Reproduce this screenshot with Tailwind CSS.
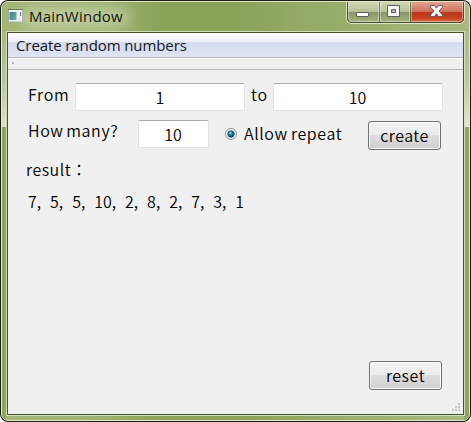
<!DOCTYPE html>
<html lang="en">
<head>
<meta charset="utf-8">
<title>MainWindow</title>
<script src="https://cdn.jsdelivr.net/npm/@tailwindcss/browser@4"></script>
</head>
<body class="bg-white overflow-hidden">
<div class="w-[471px] h-[422px] rounded-[8px] bg-[#1c1f14] p-px pt-px">
<div class="w-full h-full rounded-[7px] border border-[#dfe8c9] bg-[linear-gradient(90deg,#a3b676_0%,#9fb473_18%,#8ba259_35%,#8ba259_50%,#94aa66_65%,#a6ba7f_100%)] flex flex-col overflow-hidden relative">
  <div class="absolute left-0 top-[29px] w-[4px] h-[96px] bg-[linear-gradient(180deg,#a6b97c,#b9c699_50%,#dde3c9)]"></div>
  <div class="absolute right-0 top-[29px] w-[5px] h-[96px] bg-[linear-gradient(180deg,#a9bd82,#b9c699_50%,#e2e8d4)]"></div>
  <div class="absolute left-0 top-[125px] w-[4px] h-[293px] bg-[#8fa45c]"></div>
  <div class="absolute right-0 top-[125px] w-[5px] h-[293px] bg-[#90a55f]"></div>

  <header class="h-[29px] shrink-0 flex items-start">
    <svg class="ml-[6px] mt-[7px] shrink-0" width="15" height="14" viewBox="0 0 15 14">
      <defs><linearGradient id="pane" x1="0" y1="0" x2="1" y2="1"><stop stop-color="#3f7793"/><stop offset="1" stop-color="#68ad94"/></linearGradient></defs>
      <rect x=".5" y=".5" width="14" height="12.5" fill="#f2f3f3" stroke="#a3aaa9"/>
      <path d="M0 .5h15" stroke="#65716e"/>
      <rect x="1.5" y="3" width="7" height="8" fill="url(#pane)"/>
      <path d="M12.5 3v4" stroke="#526a87"/><path d="M10 10.5h3" stroke="#cbd0d0"/>
    </svg>
    <div class="ml-[6px] mt-[3px] relative">
      <div class="absolute -left-2 -right-2 top-[3px] h-[20px] rounded-full bg-[#e9eedb]/45 blur-[7px]"></div>
      <span class="relative block whitespace-nowrap text-[15px] leading-[22px] tracking-[0.25px] text-[#15170f] font-['Open_Sans',sans-serif]">MainWindow</span>
    </div>
    <div class="ml-auto -mt-px mr-[4px] shrink-0">
      <svg width="119" height="23" viewBox="0 0 119 23">
        <defs>
          <linearGradient id="glass" x1="0" y1="0" x2="0" y2="1"><stop stop-color="#d0dab9"/><stop offset=".48" stop-color="#b4c095"/><stop offset=".5" stop-color="#879669"/><stop offset="1" stop-color="#a8bb80"/></linearGradient>
          <linearGradient id="red" x1="0" y1="0" x2="0" y2="1"><stop stop-color="#e5a797"/><stop offset=".47" stop-color="#cc705b"/><stop offset=".5" stop-color="#b9371a"/><stop offset=".75" stop-color="#c9411f"/><stop offset="1" stop-color="#e28458"/></linearGradient>
          <clipPath id="shape"><path d="M1 0H118V17Q118 22 113 22H6Q1 22 1 17Z"/></clipPath>
        </defs>
        <g clip-path="url(#shape)">
          <rect width="64" height="23" fill="url(#glass)"/>
          <rect x="64" width="55" height="23" fill="url(#red)"/>
          <path d="M2.5 0V17Q2.5 20.5 6 20.5H32.5V0M34.5 0V20.5H63.5V0M65.5 0V20.5H113Q116.5 20.5 116.5 17V0" fill="none" stroke="#fff" stroke-opacity=".4"/>
          <path d="M33.5 0V22M64.500 0V22" stroke="#56613f" stroke-opacity=".75"/>
        </g>
        <path d="M.5 0V17Q.5 22.500 6 22.500H113Q118.500 22.500 118.500 17V0" fill="none" stroke="#edf2e1" stroke-opacity=".8"/>
        <path d="M1.500 0V17Q1.500 21.500 6 21.500H113Q117.500 21.500 117.500 17V0" fill="none" stroke="#48502f"/>
        <rect x="10.500" y="11.500" width="12" height="4" rx=".5" fill="#fff" stroke="#5b6060"/>
        <path d="M41.500 4.500h12v11h-12zM45.500 8.500v3h4v-3z" fill="#f7f7f7" fill-rule="evenodd" stroke="#5b6060"/>
        <path d="M84.500 4.500h4l2 2.700 2-2.700h4v1.600l-3.400 3.900 3.400 4v1.500h-4l-2-2.700-2 2.700h-4v-1.500l3.400-4-3.400-3.900z" fill="#fafafa" stroke="#685655"/>
      </svg>
    </div>
  </header>

  <div class="ml-[4px] w-[459px] h-[385px] relative border border-[#d3dfb8] shrink-0">
  <div class="w-full h-full border border-[#46522b] bg-[#f0f0f0] flex flex-col">
    <nav class="h-[24px] shrink-0 bg-[linear-gradient(180deg,#fff_0%,#eef1f9_36%,#d4dbed_38%,#dfe5f5_100%)] pl-[8px] font-['Open_Sans',sans-serif] text-[15px] leading-[25px] -tracking-[0.1px] text-[#17191d] whitespace-nowrap">Create random numbers</nav>
    <div class="h-[13px] shrink-0 border-y border-[#b6b6b6] shadow-[inset_0_1px_0_#fff] pl-[4px] pt-[4px]"><div class="w-[2px] h-[2px] bg-[#b2b2b2]"></div></div>

    <main class="flex-1 flex flex-col font-['Noto_Sans_CJK_TC',sans-serif] font-[350] text-[16px] leading-[24px] text-black whitespace-nowrap">
      <div class="flex items-start mt-[13px] h-[28px] pl-[20px]">
        <label class="w-[47px] -mt-px tracking-[0.7px]">From</label>
        <div class="w-[170px] h-[28px] rounded-[2px] border border-[#e2e3ea] border-t-[#abadb3] bg-white text-center pt-[1px]">1</div>
        <label class="w-[28px] -mt-px pl-[6px] tracking-[0.7px]">to</label>
        <div class="w-[170px] h-[28px] rounded-[2px] border border-[#e2e3ea] border-t-[#abadb3] bg-white text-center pt-[1px] pr-[1px]">10</div>
      </div>
      <div class="flex items-start mt-[9px] h-[31px] pl-[20px]">
        <label class="w-[110px] -mt-[2px] tracking-[0.6px] [word-spacing:-1.500px]">How many?</label>
        <div class="w-[71px] h-[28px] rounded-[2px] border border-[#e2e3ea] border-t-[#abadb3] bg-white text-center pt-[1px] pr-[1px]">10</div>
        <svg class="ml-[16px] mt-[8px]" width="12" height="12" viewBox="0 0 12 12">
          <defs><radialGradient id="dot" cx=".4" cy=".35" r=".65"><stop stop-color="#a9e4f5"/><stop offset=".4" stop-color="#278bb4"/><stop offset="1" stop-color="#0b3656"/></radialGradient></defs>
          <circle cx="6" cy="6" r="5.500" fill="#f7f7f7" stroke="#8e8f8f"/>
          <circle cx="6" cy="6" r="4" fill="#d9dfe2"/>
          <circle cx="6" cy="6" r="3.200" fill="url(#dot)" stroke="#173f5c" stroke-width=".7"/>
        </svg>
        <label class="ml-[7px] mt-px w-[124px] tracking-[0.6px] [word-spacing:-1px]">Allow repeat</label>
        <button class="mt-px w-[73px] h-[29px] rounded-[3px] border border-[#707070] bg-[linear-gradient(180deg,#f2f2f2_0%,#ebebeb_48%,#dddddd_50%,#cfcfcf_100%)] shadow-[inset_0_0_0_1px_#fafafa] leading-[24px] pt-[1px] tracking-[0.5px] flex justify-center">create</button>
      </div>
      <div class="mt-[6px] pl-[18px] tracking-[0.5px]">result：</div>
      <div class="mt-[8px] pl-[20px] whitespace-pre [word-spacing:0.92px]">7,  5,  5,  10,  2,  8,  2,  7,  3,  1</div>
      <div class="mt-auto flex justify-end pr-[21px] pb-[24px]">
        <button class="w-[73px] h-[29px] rounded-[3px] border border-[#707070] bg-[linear-gradient(180deg,#f2f2f2_0%,#ebebeb_48%,#dddddd_50%,#cfcfcf_100%)] shadow-[inset_0_0_0_1px_#fafafa] leading-[24px] pt-[1px] tracking-[0.5px] flex justify-center">reset</button>
      </div>
    </main>
  </div>
  <svg class="absolute right-[2px] bottom-[2px]" width="11" height="10" viewBox="0 0 11 10" fill="#c6c6c6"><path d="M7 0h2v2h-2zM4 3h2v2h-2zM7 3h2v2h-2zM1 6h2v2h-2zM4 6h2v2h-2zM7 6h2v2h-2z"/></svg>
  </div>
</div>
</div>
</body>
</html>
